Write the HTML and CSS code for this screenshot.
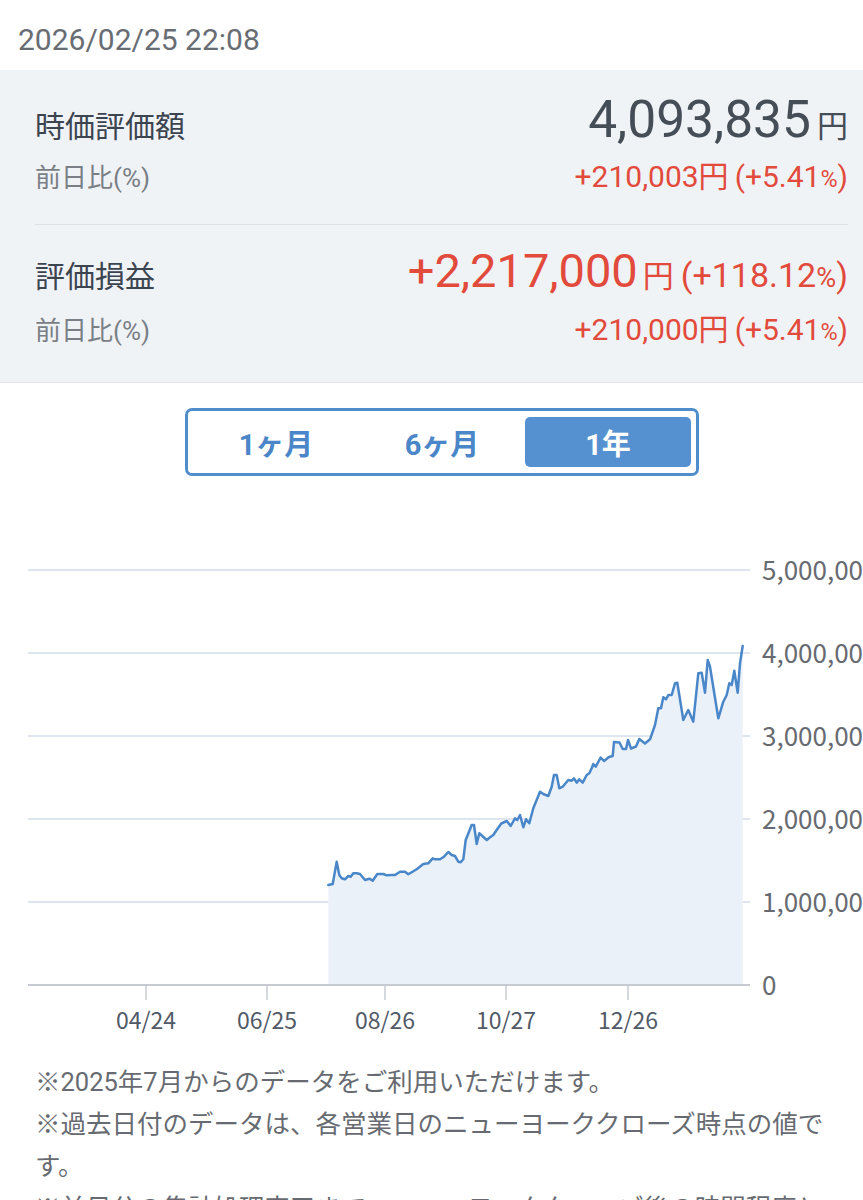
FILE: index.html
```html
<!DOCTYPE html>
<html lang="ja">
<head>
<meta charset="utf-8">
<title>資産推移</title>
<link rel="stylesheet" href="styles.css">
</head>
<body>
<div class="stamp">2026/02/25 22:08</div>

<section class="panel">
  <div class="block first">
    <div class="row main">
      <span class="label">時価評価額</span>
      <span class="value"><span class="big">4,093,835</span><span class="yen">円</span></span>
    </div>
    <div class="row sub">
      <span class="sublabel">前日比(%)</span>
      <span class="delta">+210,003円<span class="paren">(+5.41<small>%</small>)</span></span>
    </div>
  </div>
  <div class="block second">
    <div class="row main">
      <span class="label">評価損益</span>
      <span class="value red"><span class="big big2">+2,217,000</span><span class="yen yen2">円</span><span class="pct">(+118.12<small>%</small>)</span></span>
    </div>
    <div class="row sub">
      <span class="sublabel">前日比(%)</span>
      <span class="delta">+210,000円<span class="paren">(+5.41<small>%</small>)</span></span>
    </div>
  </div>
</section>

<div class="seg">
  <div class="seg-item">1ヶ月</div>
  <div class="seg-item">6ヶ月</div>
  <div class="seg-item active">1年</div>
</div>

<svg class="chart" width="863" height="505" viewBox="0 540 863 505" xmlns="http://www.w3.org/2000/svg">
  <g class="grid">
    <line x1="28" y1="570" x2="750" y2="570"/>
    <line x1="28" y1="653" x2="750" y2="653"/>
    <line x1="28" y1="736" x2="750" y2="736"/>
    <line x1="28" y1="819" x2="750" y2="819"/>
    <line x1="28" y1="902" x2="750" y2="902"/>
  </g>
  <path class="area" d="M328.3,885 L332.7,884 L336.7,861.7 L339.3,875 L341.7,878.3 L345,879.3 L348.3,876 L350.7,876.7 L353.3,873.3 L356.7,873.3 L360,874 L365,880 L369.3,878.7 L372.7,880.7 L377.3,874 L383.3,874 L386.7,875.3 L391.7,875 L395,875 L400,871.7 L405,871.7 L408.3,874.3 L416.7,869.3 L423.3,864 L428.3,863.3 L432.7,858.3 L435,859.3 L440,859.3 L444,856.7 L448.3,852 L451.7,855 L455,856 L458.3,861.7 L460.7,862.3 L463.3,859.3 L465.7,840 L471.7,825 L474,825 L476.7,844 L479.3,833.3 L486.7,840 L490.7,836.7 L493.3,835 L496.7,830 L501.3,823.5 L506.7,821 L510.7,826 L515,818.3 L517.3,820 L520,815 L523.3,827.3 L526,819.3 L529.3,823.3 L533.3,808.3 L540,791.7 L543.3,794 L548.3,796 L551.7,786.7 L554,775 L556.7,775 L559.3,788.3 L562.7,786.7 L568.3,780 L571.7,780.7 L574,778.3 L576.7,782.7 L579.3,779.3 L582.7,782.7 L586.7,775 L589.3,773.3 L591.7,768.3 L593.3,764 L595.7,766.7 L600.7,757.5 L604,761 L609,757 L612.7,756 L614,742 L619.5,742.5 L622.7,749 L626,749 L628,740 L631,748.5 L636,746.5 L639.3,739 L645,743.5 L650,739.3 L655,725 L658.3,708.3 L661,708.3 L663.3,697.3 L666,699.3 L668.3,695 L671.7,695 L675,683.3 L677.3,682.7 L683.3,720 L688.3,710 L693.3,721.7 L698.3,673.3 L701.7,672.7 L705,692.7 L707.7,660 L710,666.7 L718.3,718.3 L723.3,701.7 L726.7,695 L729.3,683.3 L731.7,685 L734.3,670.7 L737.7,692.7 L740,663.3 L742.7,646 L742.7,985 L328.3,985 Z"/>
  <path class="line" d="M328.3,885 L332.7,884 L336.7,861.7 L339.3,875 L341.7,878.3 L345,879.3 L348.3,876 L350.7,876.7 L353.3,873.3 L356.7,873.3 L360,874 L365,880 L369.3,878.7 L372.7,880.7 L377.3,874 L383.3,874 L386.7,875.3 L391.7,875 L395,875 L400,871.7 L405,871.7 L408.3,874.3 L416.7,869.3 L423.3,864 L428.3,863.3 L432.7,858.3 L435,859.3 L440,859.3 L444,856.7 L448.3,852 L451.7,855 L455,856 L458.3,861.7 L460.7,862.3 L463.3,859.3 L465.7,840 L471.7,825 L474,825 L476.7,844 L479.3,833.3 L486.7,840 L490.7,836.7 L493.3,835 L496.7,830 L501.3,823.5 L506.7,821 L510.7,826 L515,818.3 L517.3,820 L520,815 L523.3,827.3 L526,819.3 L529.3,823.3 L533.3,808.3 L540,791.7 L543.3,794 L548.3,796 L551.7,786.7 L554,775 L556.7,775 L559.3,788.3 L562.7,786.7 L568.3,780 L571.7,780.7 L574,778.3 L576.7,782.7 L579.3,779.3 L582.7,782.7 L586.7,775 L589.3,773.3 L591.7,768.3 L593.3,764 L595.7,766.7 L600.7,757.5 L604,761 L609,757 L612.7,756 L614,742 L619.5,742.5 L622.7,749 L626,749 L628,740 L631,748.5 L636,746.5 L639.3,739 L645,743.5 L650,739.3 L655,725 L658.3,708.3 L661,708.3 L663.3,697.3 L666,699.3 L668.3,695 L671.7,695 L675,683.3 L677.3,682.7 L683.3,720 L688.3,710 L693.3,721.7 L698.3,673.3 L701.7,672.7 L705,692.7 L707.7,660 L710,666.7 L718.3,718.3 L723.3,701.7 L726.7,695 L729.3,683.3 L731.7,685 L734.3,670.7 L737.7,692.7 L740,663.3 L742.7,646"/>
  <line class="axis" x1="28" y1="985" x2="750" y2="985"/>
  <g class="ticks">
    <line x1="146" y1="986" x2="146" y2="1000"/>
    <line x1="267" y1="986" x2="267" y2="1000"/>
    <line x1="385" y1="986" x2="385" y2="1000"/>
    <line x1="506" y1="986" x2="506" y2="1000"/>
    <line x1="628" y1="986" x2="628" y2="1000"/>
  </g>
  <g class="ylabels">
    <text x="762" y="580">5,000,000</text>
    <text x="762" y="663">4,000,000</text>
    <text x="762" y="746">3,000,000</text>
    <text x="762" y="829">2,000,000</text>
    <text x="762" y="912">1,000,000</text>
    <text x="762" y="995">0</text>
  </g>
  <g class="xlabels">
    <text x="146" y="1029">04/24</text>
    <text x="267" y="1029">06/25</text>
    <text x="385" y="1029">08/26</text>
    <text x="506" y="1029">10/27</text>
    <text x="628" y="1029">12/26</text>
  </g>
</svg>

<div class="notes">
  <p>※2025年7月からのデータをご利用いただけます。</p>
  <p>※過去日付のデータは、各営業日のニューヨーククローズ時点の値です。</p>
  <p>※前日分の集計処理完了まで、ニューヨーククローズ後の時間程度となる場合があります。</p>
</div>
</body>
</html>
```

FILE: styles.css
```css
html, body {
  margin: 0;
  padding: 0;
  background: #ffffff;
}
body {
  width: 863px;
  font-family: Roboto, "Noto Sans CJK JP", sans-serif;
  color: #3f4650;
  overflow: hidden;
}
.stamp {
  height: 70px;
  display: flex;
  align-items: center;
  padding-left: 18px;
  font-size: 30px;
  color: #686d74;
  box-sizing: border-box;
  padding-top: 8px;
}
.panel {
  background: #f0f3f6;
  padding: 0 15px 0 35px;
  border-bottom: 1px solid #e2e5e9;
}
.block.first {
  padding: 24px 0 28px;
  border-bottom: 1px solid #dde1e5;
}
.block.second {
  padding: 20px 0 33px;
}
.row {
  display: flex;
  justify-content: space-between;
  align-items: baseline;
}
.row.main {
  height: 52px;
  line-height: 52px;
}
.row.sub {
  margin-top: 12px;
  height: 38px;
  line-height: 38px;
}
.block.second .row.sub {
  margin-top: 14px;
}
.label {
  font-size: 30px;
  color: #3c4450;
}
.sublabel {
  font-size: 26px;
  color: #7a7f86;
}
.value {
  color: #454d57;
  white-space: nowrap;
}
.value.red {
  color: #e24a3b;
}
.big {
  font-size: 51.5px;
}
.big.big2 {
  font-size: 47px;
}
.yen {
  font-size: 31px;
  margin-left: 6px;
}
.yen.yen2 {
  margin-left: 5px;
}
.pct {
  font-size: 34px;
  margin-left: 7px;
}
.pct small {
  font-size: 0.8em;
}
.paren small {
  font-size: 0.78em;
}
.delta {
  font-size: 30px;
  color: #e24a3b;
  white-space: nowrap;
}
.paren {
  margin-left: 6px;
}
.seg {
  margin: 25px 0 0 185px;
  width: 514px;
  height: 68px;
  box-sizing: border-box;
  border: 3px solid #4f8dcd;
  border-radius: 7px;
  padding: 6px 5px;
  display: flex;
  background: #fff;
}
.seg-item {
  flex: 1;
  display: flex;
  align-items: center;
  justify-content: center;
  font-size: 29px;
  font-weight: 700;
  color: #4a86c8;
  border-radius: 5px;
}
.seg-item.active {
  background: #5590d0;
  color: #ffffff;
}
.chart {
  display: block;
  margin-top: 64px;
}
.grid line {
  stroke: #dfe5ee;
  stroke-width: 2;
}
.area {
  fill: #ebf1f9;
  stroke: none;
}
.line {
  fill: none;
  stroke: #4a87c9;
  stroke-width: 2.5;
  stroke-linejoin: round;
  stroke-linecap: round;
}
.axis {
  stroke: #c7cbd1;
  stroke-width: 2;
}
.ticks line {
  stroke: #c7cbd1;
  stroke-width: 1.5;
}
.ylabels text {
  font-family: "Noto Sans CJK JP", sans-serif;
  font-size: 26px;
  fill: #676b71;
}
.xlabels text {
  font-family: "Noto Sans CJK JP", sans-serif;
  font-size: 23px;
  fill: #525a67;
  text-anchor: middle;
}
.notes {
  padding: 16px 35px 0;
  font-size: 25.5px;
  line-height: 42px;
  color: #676b71;
}
.notes p {
  margin: 0;
}
```
